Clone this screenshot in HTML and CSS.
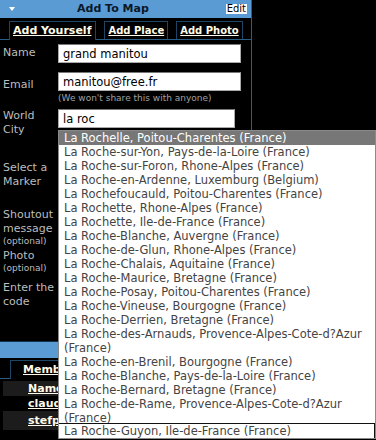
FILE: index.html
```html
<!DOCTYPE html>
<html lang="en">
<head>
  <meta charset="UTF-8">
  <meta name="viewport" content="width=device-width, initial-scale=1.0">
  <title>Add To Map</title>
  <link rel="stylesheet" href="styles.css">
</head>
<body>
  <section class="panel">
    <div class="panel-head">
      <span class="toggle"></span>
      <span class="panel-title">Add To Map</span>
      <span class="edit">Edit</span>
    </div>
    <ul class="tabs">
      <li class="tab active"><a href="#">Add Yourself</a></li>
      <li class="tab"><a href="#">Add Place</a></li>
      <li class="tab"><a href="#">Add Photo</a></li>
    </ul>

    <form class="map-form">
      <div class="row row-name">
        <label for="name">Name</label>
        <div class="field"><input type="text" id="name" value="grand manitou"></div>
      </div>
      <div class="row row-email">
        <label for="email">Email</label>
        <div class="field">
          <input type="text" id="email" value="manitou@free.fr">
          <p class="hint">(We won't share this with anyone)</p>
        </div>
      </div>
      <div class="row row-city">
        <label for="city">World City</label>
        <div class="field city">
          <input type="text" id="city" value="la roc">
          <ul class="suggest">
            <li class="sel">La Rochelle, Poitou-Charentes (France)</li>
            <li>La Roche-sur-Yon, Pays-de-la-Loire (France)</li>
            <li>La Roche-sur-Foron, Rhone-Alpes (France)</li>
            <li>La Roche-en-Ardenne, Luxemburg (Belgium)</li>
            <li>La Rochefoucauld, Poitou-Charentes (France)</li>
            <li>La Rochette, Rhone-Alpes (France)</li>
            <li>La Rochette, Ile-de-France (France)</li>
            <li>La Roche-Blanche, Auvergne (France)</li>
            <li>La Roche-de-Glun, Rhone-Alpes (France)</li>
            <li>La Roche-Chalais, Aquitaine (France)</li>
            <li>La Roche-Maurice, Bretagne (France)</li>
            <li>La Roche-Posay, Poitou-Charentes (France)</li>
            <li>La Roche-Vineuse, Bourgogne (France)</li>
            <li>La Roche-Derrien, Bretagne (France)</li>
            <li>La Roche-des-Arnauds, Provence-Alpes-Cote-d?Azur (France)</li>
            <li>La Roche-en-Brenil, Bourgogne (France)</li>
            <li>La Roche-Blanche, Pays-de-la-Loire (France)</li>
            <li>La Roche-Bernard, Bretagne (France)</li>
            <li>La Roche-de-Rame, Provence-Alpes-Cote-d?Azur (France)</li>
            <li class="last">La Roche-Guyon, Ile-de-France (France)</li>
          </ul>
        </div>
      </div>
      <div class="row row-marker"><label>Select a Marker</label></div>
      <div class="row row-shout"><label>Shoutout message <small>(optional)</small></label></div>
      <div class="row row-photo"><label>Photo <small>(optional)</small></label></div>
      <div class="row row-code"><label>Enter the code</label></div>
    </form>
  </section>

  <!-- the city list lies over most of this panel -->
  <section class="panel members">
    <div class="panel-head"></div>
    <ul class="tabs">
      <li class="tab active"><a href="#">Members</a></li>
    </ul>
    <div class="member-list">
      <div class="member alt"><a href="#">Name</a></div>
      <div class="member"><a href="#">claudette</a></div>
      <div class="member alt tall"><a href="#">stefpatou</a></div>
    </div>
  </section>
</body>
</html>
```

FILE: styles.css
```css
:root {
  font-family: "DejaVu Sans", Verdana, sans-serif;
}
html, body {
  margin: 0;
  height: 100%;
  overflow: hidden;
  background: #000;
}
body {
  font-size: 11px;
  line-height: 14px;
  color: #bdbdbd;
}
.panel {
  width: 251px;
  border-right: 1px solid #2c5d85;
}
.panel-head {
  display: flex;
  align-items: center;
  height: 18px;
  padding: 0 4px 0 9px;
  background: #5b9bd3;
}
.toggle {
  width: 0;
  height: 0;
  border-left: 3.5px solid transparent;
  border-right: 3.5px solid transparent;
  border-top: 4px solid #fff;
}
.panel-title {
  flex: 1;
  margin-left: 62px;
  font-weight: bold;
  color: #0a1828;
}
.edit {
  background: #fff;
  color: #000;
  font-size: 10px;
  line-height: 10px;
  padding: 0 1px;
}

.tabs {
  display: flex;
  gap: 8px;
  list-style: none;
  margin: 0;
  padding: 3px 0 0 9px;
  border-bottom: 1px solid #2c5d85;
}
.tab {
  height: 17px;
  padding: 0 3px;
  border: 1px solid #1f4566;
  border-bottom: none;
  font-size: 10px;
  line-height: 17px;
}
.tab.active {
  height: 18px;
  margin-bottom: -1px;
  padding: 0 4px 0 3px;
  background: #000;
  font-size: 11px;
}
.tab a {
  color: #fffbe8;
  font-weight: bold;
}

.map-form {
  padding-top: 4px;
}
.row {
  display: flex;
  align-items: flex-start;
}
.row label {
  flex: none;
  width: 55px;
  padding-left: 3px;
}
.row small {
  display: block;
  font-size: 9px;
  line-height: 11px;
}
.field {
  flex: 1;
}
.field input {
  box-sizing: border-box;
  width: 183px;
  height: 19px;
  margin: 0;
  padding: 0 4px;
  border: 1px solid #aaa;
  border-top-color: #777;
  background: #fff;
  color: #000;
  font: 11.5px "DejaVu Sans", Verdana, sans-serif;
}
.hint {
  margin: 2px 0 0;
  font-size: 9px;
  line-height: 11px;
  color: #a0a0a0;
}
.row-name label { padding-top: 2px; }
.row-email { margin-top: 9px; }
.row-email label { padding-top: 6px; }
.row-city { margin-top: 5px; }
.row-city label { height: 28px; }
.row-marker { margin-top: 24px; }
.row-shout { margin-top: 19px; }
.row-photo { margin-top: 2px; }
.row-code { margin-top: 7px; }

.city {
  position: relative;
}
.city input {
  width: 177px;
}
.suggest {
  position: absolute;
  top: 21px;
  left: 0;
  z-index: 2;
  box-sizing: border-box;
  width: 318px;
  margin: 0;
  padding: 0;
  list-style: none;
  background: #fff;
  border: 1px solid #8a8a8a;
  font-size: 11.5px;
  line-height: 14px;
  color: #444;
}
.suggest li {
  padding: 0 2px 0 5px;
}
.suggest li.sel {
  background: #777;
  color: #fff;
}
.suggest li.last {
  position: relative;
  margin-top: -2px;
  border-top: 1px solid #111;
  border-right: 1px solid #111;
  background: #fff;
}

.members {
  margin-top: 32px;
}
.members .panel-head {
  height: 16px;
  border-top: 1px solid #14324d;
}
.members .tabs {
  padding: 2px 0 0 10px;
}
.members .tab.active {
  padding: 0 4px 0 12px;
}
.member-list {
  margin: 2px 0 0 3px;
}
.member {
  height: 15px;
  padding-left: 25px;
  font-weight: bold;
  line-height: 15px;
}
.member.alt {
  background: #1c1c1c;
}
.member.tall {
  height: 19px;
  line-height: 20px;
}
.member a {
  color: #fffbe8;
}
```
